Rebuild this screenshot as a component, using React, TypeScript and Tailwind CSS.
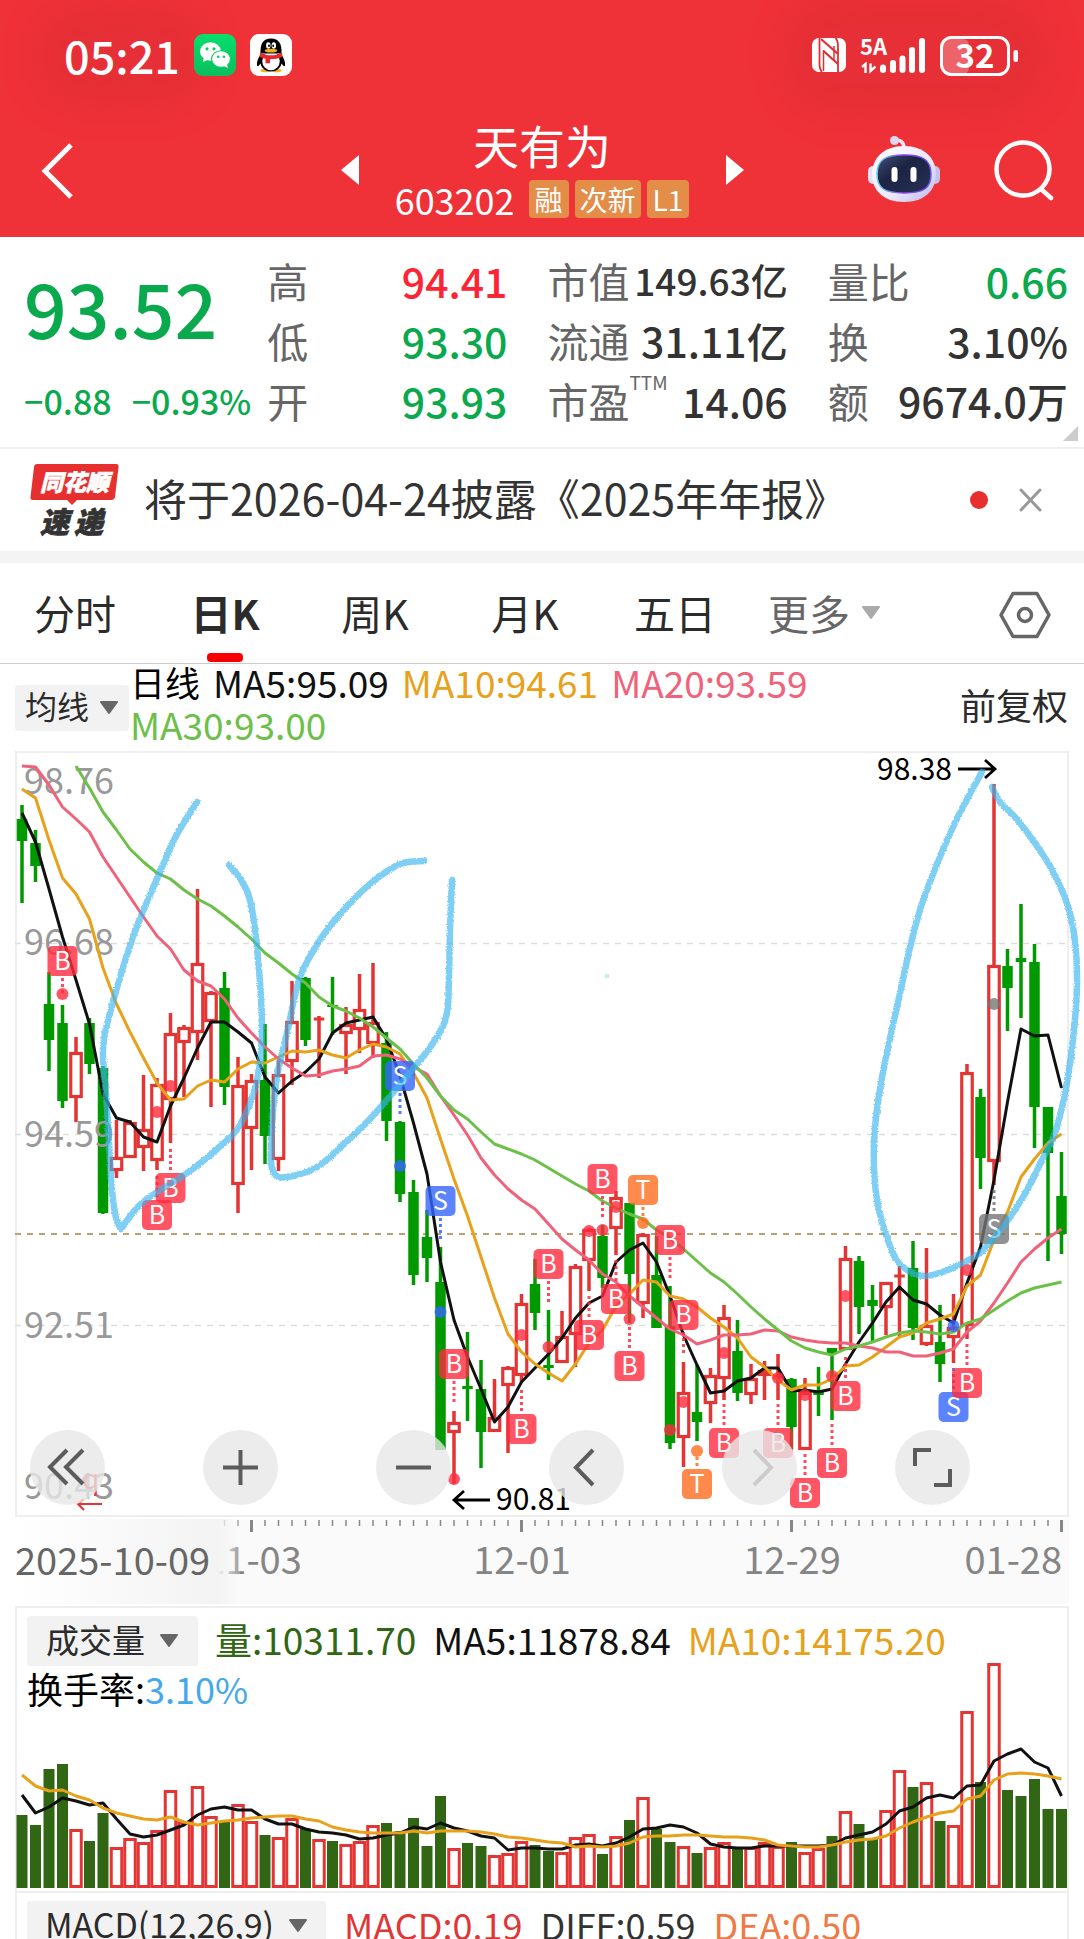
import React from "react";

const GREEN = "#009900";
const RED = "#e23534";
const ORANGE = "#e7a11a";
const PINK = "#f0627a";
const LIME = "#6cc04a";

const cx = (i: number) => 22 + i * 13.5;

type Tone = "r" | "g";
type Candle = [Tone, number, number, number, number];

// tone, high, body top, body bottom, low
const candles: Candle[] = [
  ["g", 805, 819, 841, 903], ["g", 830, 843, 866, 882], ["g", 972, 1004, 1040, 1071], ["g", 1005, 1023, 1101, 1108],
  ["r", 1037, 1052, 1098, 1122], ["g", 1018, 1023, 1064, 1074], ["g", 1066, 1068, 1213, 1214], ["r", 1120, 1157, 1171, 1178],
  ["r", 1120, 1122, 1158, 1157], ["r", 1075, 1129, 1148, 1171], ["r", 1078, 1084, 1161, 1170], ["r", 1013, 1033, 1100, 1143],
  ["r", 1025, 1027, 1043, 1097], ["r", 889, 963, 1033, 1060], ["r", 991, 992, 1022, 1107], ["g", 972, 988, 1087, 1105],
  ["r", 1057, 1085, 1185, 1213], ["r", 1074, 1080, 1129, 1170], ["g", 1024, 1080, 1136, 1164], ["r", 1060, 1074, 1160, 1171],
  ["r", 981, 1021, 1062, 1085], ["g", 977, 978, 1040, 1046], ["r", 1016, 1018, 1020, 1078], ["g", 977, 1005, 1007, 1035],
  ["r", 1007, 1024, 1034, 1074], ["r", 974, 1009, 1030, 1053], ["r", 963, 1022, 1044, 1058], ["g", 1032, 1043, 1121, 1141],
  ["g", 1121, 1122, 1194, 1202], ["g", 1180, 1192, 1275, 1285], ["g", 1210, 1237, 1258, 1282], ["g", 1247, 1282, 1450, 1450],
  ["r", 1411, 1422, 1433, 1484], ["g", 1332, 1386, 1389, 1421], ["g", 1360, 1389, 1432, 1468], ["r", 1379, 1417, 1432, 1432],
  ["r", 1366, 1367, 1386, 1453], ["r", 1294, 1303, 1376, 1382], ["g", 1259, 1284, 1313, 1330], ["g", 1310, 1365, 1368, 1380],
  ["r", 1311, 1336, 1363, 1362], ["r", 1264, 1266, 1335, 1367], ["r", 1228, 1229, 1261, 1291], ["g", 1225, 1236, 1278, 1288],
  ["r", 1191, 1197, 1229, 1255], ["g", 1203, 1203, 1274, 1323], ["r", 1233, 1234, 1304, 1318], ["g", 1236, 1275, 1328, 1328],
  ["g", 1286, 1326, 1443, 1449], ["r", 1362, 1392, 1438, 1467], ["g", 1365, 1412, 1422, 1441], ["r", 1368, 1375, 1404, 1423],
  ["r", 1305, 1317, 1379, 1400], ["g", 1320, 1351, 1393, 1401], ["r", 1364, 1378, 1395, 1404], ["r", 1361, 1370, 1376, 1400],
  ["r", 1354, 1376, 1378, 1400], ["g", 1378, 1379, 1427, 1449], ["r", 1378, 1392, 1450, 1450], ["g", 1367, 1392, 1395, 1416],
  ["g", 1348, 1348, 1353, 1420], ["r", 1246, 1258, 1350, 1350], ["g", 1256, 1261, 1307, 1334], ["g", 1285, 1300, 1306, 1342],
  ["r", 1282, 1282, 1308, 1335], ["r", 1266, 1275, 1277, 1337], ["g", 1241, 1268, 1328, 1340], ["r", 1248, 1325, 1345, 1346],
  ["g", 1305, 1342, 1364, 1382], ["r", 1294, 1327, 1338, 1363], ["r", 1064, 1072, 1326, 1339], ["g", 1089, 1097, 1158, 1189],
  ["r", 784, 965, 1162, 1185], ["g", 949, 966, 988, 1031], ["g", 904, 958, 962, 1018], ["g", 944, 962, 1107, 1148],
  ["g", 1107, 1107, 1153, 1261], ["g", 1152, 1196, 1234, 1254],
];

const ma5 = [813,842,889,937,980,1024,1094,1118,1122,1137,1142,1106,1078,1048,1022,1022,1032,1043,1077,1093,1081,1072,1059,1033,1023,1020,1017,1039,1076,1123,1174,1262,1320,1357,1389,1422,1407,1382,1368,1354,1338,1318,1303,1296,1262,1250,1243,1262,1296,1335,1365,1393,1391,1381,1378,1368,1368,1391,1390,1392,1389,1364,1342,1323,1302,1287,1300,1304,1315,1323,1283,1247,1180,1102,1029,1036,1035,1088];
const ma10 = [789,798,840,878,894,919,968,1004,1032,1058,1083,1100,1099,1086,1080,1082,1069,1062,1063,1057,1051,1052,1050,1055,1058,1050,1044,1047,1054,1073,1098,1139,1179,1216,1257,1298,1334,1352,1364,1373,1381,1364,1343,1330,1306,1294,1280,1282,1296,1299,1307,1318,1327,1338,1357,1367,1380,1390,1385,1385,1379,1366,1365,1357,1347,1337,1333,1323,1319,1314,1286,1275,1240,1212,1177,1159,1143,1134];
const ma20 = [766,767,785,807,819,832,857,877,897,917,936,949,970,981,986,999,1018,1033,1047,1059,1068,1076,1075,1071,1069,1066,1056,1055,1059,1067,1074,1096,1115,1135,1158,1175,1189,1200,1209,1224,1239,1250,1260,1274,1282,1296,1307,1318,1329,1335,1344,1340,1335,1335,1334,1330,1331,1337,1340,1342,1343,1343,1346,1348,1352,1352,1356,1356,1353,1349,1332,1321,1303,1283,1262,1249,1238,1229];
const ma30 = [766,788,812,830,849,862,873,879,890,899,906,916,927,939,953,963,974,983,997,1006,1011,1018,1027,1038,1049,1064,1078,1096,1110,1119,1132,1144,1149,1154,1160,1168,1176,1184,1191,1201,1208,1214,1219,1230,1238,1249,1261,1273,1282,1294,1307,1319,1330,1341,1348,1352,1355,1349,1346,1342,1337,1333,1331,1332,1334,1332,1323,1319,1310,1301,1293,1288,1285,1282];

type Marker = { k: "B" | "S" | "T"; i: number; top: number; dot: number; color: string };
const B = "#ff2a3f";
const S = "#3465ff";
const T = "#ff6d1f";
const markers: Marker[] = [
  { k: "B", i: 3, top: 946, dot: 994, color: B },
  { k: "B", i: 11, top: 1173, dot: 1086, color: B },
  { k: "B", i: 10, top: 1200, dot: 1112, color: B },
  { k: "S", i: 28, top: 1061, dot: 1166, color: S },
  { k: "S", i: 31, top: 1186, dot: 1312, color: S },
  { k: "B", i: 32, top: 1349, dot: 1479, color: B },
  { k: "B", i: 37, top: 1414, dot: 1335, color: B },
  { k: "B", i: 39, top: 1249, dot: 1347, color: B },
  { k: "B", i: 42, top: 1320, dot: 1231, color: B },
  { k: "B", i: 43, top: 1164, dot: 1230, color: B },
  { k: "B", i: 44, top: 1284, dot: 1207, color: B },
  { k: "T", i: 46, top: 1175, dot: 1223, color: T },
  { k: "B", i: 45, top: 1351, dot: 1319, color: B },
  { k: "B", i: 48, top: 1225, dot: 1430, color: B },
  { k: "B", i: 49, top: 1300, dot: 1402, color: B },
  { k: "T", i: 50, top: 1469, dot: 1451, color: T },
  { k: "B", i: 52, top: 1428, dot: 1353, color: B },
  { k: "B", i: 56, top: 1428, dot: 1378, color: B },
  { k: "B", i: 58, top: 1478, dot: 1395, color: B },
  { k: "B", i: 60, top: 1448, dot: 1376, color: B },
  { k: "B", i: 61, top: 1381, dot: 1296, color: B },
  { k: "S", i: 69, top: 1392, dot: 1326, color: S },
  { k: "B", i: 70, top: 1368, dot: 1270, color: B },
  { k: "S", i: 72, top: 1214, dot: 1004, color: "#777777" },
];

const volTone = "ggggrggrrrrrrrrgrrgrrgrgrrrgggggrggrrrggrrrgrgrggrgrrgrrrgrrgrggrrgrgrrgrggggg";
const volTop = [1815,1825,1769,1764,1829,1841,1813,1847,1838,1842,1830,1790,1821,1786,1816,1822,1804,1821,1835,1837,1818,1829,1839,1841,1844,1841,1825,1823,1831,1818,1846,1796,1848,1843,1846,1855,1853,1841,1845,1851,1852,1837,1834,1854,1836,1820,1797,1829,1842,1846,1853,1847,1842,1848,1847,1842,1846,1842,1852,1848,1836,1811,1824,1839,1810,1770,1787,1782,1821,1825,1711,1782,1663,1790,1796,1779,1809,1809];
const volMa5 = [1795,1813,1807,1798,1801,1805,1803,1819,1834,1837,1835,1830,1825,1815,1809,1807,1810,1810,1819,1824,1824,1829,1832,1833,1835,1839,1838,1835,1833,1827,1829,1823,1828,1831,1836,1838,1850,1848,1848,1849,1849,1845,1844,1846,1843,1837,1829,1828,1825,1827,1833,1844,1847,1848,1848,1846,1846,1846,1846,1846,1845,1838,1835,1832,1824,1811,1807,1798,1795,1798,1786,1785,1761,1754,1749,1762,1768,1796];
const volMa10 = [1775,1786,1791,1790,1796,1800,1808,1813,1816,1819,1820,1817,1822,1825,1823,1821,1820,1818,1817,1816,1816,1819,1821,1827,1830,1832,1833,1833,1833,1831,1833,1831,1831,1831,1832,1834,1837,1838,1840,1842,1843,1847,1846,1847,1846,1843,1837,1836,1836,1835,1835,1836,1837,1837,1838,1840,1845,1846,1847,1847,1845,1842,1840,1839,1836,1828,1822,1817,1813,1811,1799,1796,1780,1774,1773,1774,1776,1779];

const line = (ys: number[], from = 0) => ys.map((y, n) => `${cx(n + from)},${y}`).join(" ");

// Catmull-Rom spline through the given points
function curve(p: number[][]) {
  let d = `M${p[0][0]} ${p[0][1]}`;
  for (let i = 0; i < p.length - 1; i++) {
    const a = p[i - 1] ?? p[i];
    const b = p[i];
    const c = p[i + 1];
    const e = p[i + 2] ?? c;
    d += ` C${b[0] + (c[0] - a[0]) / 6} ${b[1] + (c[1] - a[1]) / 6} ${c[0] - (e[0] - b[0]) / 6} ${c[1] - (e[1] - b[1]) / 6} ${c[0]} ${c[1]}`;
  }
  return d;
}

const strokes = [
  [[197,802],[176,836],[160,872],[133,937],[110,1013],[103,1050],[106,1093],[109,1143],[112,1190],[116,1218],[121,1229]],
  [[121,1229],[143,1202],[187,1173],[216,1150],[240,1125],[257,1080],[262,1027],[257,947],[250,900],[241,880],[229,865]],
  [[424,861],[400,864],[370,884],[340,914],[320,940],[300,977],[287,1033],[276,1083],[271,1150],[274,1173],[287,1177],[317,1167],[345,1143],[370,1119],[417,1064],[437,1037],[447,1013],[449,975],[450,930],[452,880]],
  [[982,772],[953,827],[920,910],[900,993],[881,1083],[874,1143],[877,1200],[890,1246],[903,1267],[927,1276],[963,1263],[987,1246],[1020,1202],[1042,1160],[1056,1130],[1069,1070],[1077,983],[1071,917],[1051,868],[1020,823],[1000,802],[992,787]],
];

function Caret({ color = "#666666", w = 20 }: { color?: string; w?: number }) {
  return (
    <svg width={w} height={14} viewBox="0 0 20 14" aria-hidden="true">
      <path d="M2 1h16L10 12z" fill={color} stroke={color} strokeWidth="2" strokeLinejoin="round" />
    </svg>
  );
}

function WeChat() {
  return (
    <svg width="42" height="42" viewBox="0 0 42 42" aria-label="WeChat">
      <defs>
        <linearGradient id="wc" x1="0" y1="0" x2="0" y2="1">
          <stop offset="0" stopColor="#06df6c" />
          <stop offset="1" stopColor="#0bbd5e" />
        </linearGradient>
      </defs>
      <rect width="42" height="42" rx="9" fill="url(#wc)" />
      <path d="M10 23l-1 5 4.500-2z" fill="#fff" />
      <ellipse cx="16.500" cy="17.500" rx="10.500" ry="9.200" fill="#fff" />
      <ellipse cx="27" cy="25" rx="10" ry="8.800" fill="#09cc64" />
      <ellipse cx="27" cy="25" rx="8.900" ry="7.700" fill="#fff" />
      <path d="M30 32l3.800 2-.8-4z" fill="#fff" />
      <g fill="#0acb63">
        <circle cx="13" cy="14.800" r="1.600" /><circle cx="20" cy="14.800" r="1.600" />
        <circle cx="24.200" cy="22.800" r="1.300" /><circle cx="30" cy="22.800" r="1.300" />
      </g>
    </svg>
  );
}

function QQ() {
  return (
    <svg width="42" height="42" viewBox="0 0 42 42" aria-label="QQ">
      <rect width="42" height="42" rx="9" fill="#fff" />
      <ellipse cx="15.500" cy="36.500" rx="5" ry="1.800" fill="#f5b01a" />
      <ellipse cx="26.500" cy="36.500" rx="5" ry="1.800" fill="#f5b01a" />
      <path d="M11 20C8 24 6.500 28 7 31.500c.4 1.500 2 .3 3.500-2 1 4.500 5 8 10.500 8s9.500-3.500 10.500-8c1.500 2.300 3.100 3.500 3.500 2C35.500 28 34 24 31 20z" fill="#000" />
      <ellipse cx="21" cy="27" rx="8.800" ry="9.200" fill="#fff" />
      <path d="M10.500 19.500C10 10 13 4.500 21 4.500S32 10 31.500 19.500z" fill="#000" />
      <ellipse cx="18.300" cy="11.500" rx="2.200" ry="3.200" fill="#fff" /><ellipse cx="23.800" cy="11.500" rx="2.200" ry="3.200" fill="#fff" />
      <ellipse cx="19" cy="11.800" rx=".9" ry="1.400" /><ellipse cx="23.200" cy="11.800" rx=".9" ry="1.400" />
      <ellipse cx="21" cy="16.700" rx="6.300" ry="1.900" fill="#f5b01a" />
      <path d="M10 18.800c7 3.400 15 3.400 22 0l.5 4c-3.500 1.700-8 2.500-12.500 2.500v4h-4.500v-4.500c-2-.4-4-1-6-2z" fill="#e8262b" />
    </svg>
  );
}

function StatusBar() {
  return (
    <div className="flex h-[110px] items-center justify-between pr-[66px] pl-[64px] text-white">
      <div className="flex items-center gap-[14px]">
        <span className="rounded-full bg-[#dd2d33]/50 text-[45px] leading-[44px] font-medium shadow-[0_0_34px_26px_rgba(215,44,50,0.4)]">05:21</span>
        <WeChat />
        <QQ />
      </div>
      <div className="flex items-center rounded-full bg-[#dd2d33]/50 shadow-[0_0_34px_26px_rgba(215,44,50,0.4)]">
        <svg width="206" height="62" viewBox="811 25 206 62" role="img" aria-label="NFC, 5A signal, battery 32">
          <rect x="811" y="39" width="34" height="34" rx="7" fill="#fff" />
          <path d="M818.500 39v26c0 3 .5 6 2.500 8M837 73V47c0-3-.5-6-2.500-8" stroke="#e32e34" strokeWidth="1.800" fill="none" />
          <path d="M820 40l16.500 14.500M822.500 52L837 65" stroke="#e32e34" strokeWidth="2.200" fill="none" />
          <path d="M822.500 51v21M833 47v14" stroke="#e32e34" strokeWidth="1.500" fill="none" />
          <text x="859" y="56" fontSize="22" fontWeight="700" fill="#fff">5A</text>
          <path d="M861 68l3.500-3V74M869.500 64.500V72l5-4.500" stroke="#fff" strokeWidth="2.400" fill="none" />
          <g stroke="#fff" strokeWidth="6" strokeLinecap="round">
            <path d="M882 68.500V71M892 64V71M901.500 59.500V71M911 51V71M921 42V71" />
          </g>
          <rect x="942" y="40" width="26" height="35" rx="6" fill="#ee6269" />
          <rect x="940.500" y="38.500" width="67" height="37" rx="10" fill="none" stroke="#fff" strokeWidth="3" />
          <rect x="1012.500" y="51" width="4.500" height="12" rx="2" fill="#fff" />
          <text x="974" y="69" fontSize="33" fontWeight="700" fill="#fff" textAnchor="middle">32</text>
        </svg>
      </div>
    </div>
  );
}

function Robot() {
  return (
    <svg width="72" height="70" viewBox="868 134 72 70" aria-hidden="true">
      <defs>
        <linearGradient id="rb" x1="0" y1="0" x2="1" y2="1">
          <stop offset="0" stopColor="#ffffff" /><stop offset=".6" stopColor="#ece9fb" /><stop offset="1" stopColor="#b9b3e6" />
        </linearGradient>
        <linearGradient id="rf" x1="0" y1="0" x2="1" y2="1">
          <stop offset="0" stopColor="#44507a" /><stop offset=".4" stopColor="#1c2443" /><stop offset="1" stopColor="#283056" />
        </linearGradient>
        <linearGradient id="rr" x1="0" y1="0" x2="1" y2="0">
          <stop offset="0" stopColor="#67d3f5" /><stop offset=".5" stopColor="#8c3be0" /><stop offset="1" stopColor="#6658f0" />
        </linearGradient>
      </defs>
      <path d="M895 139.500c6-1 9 2 9 8" fill="none" stroke="#e9e4f7" strokeWidth="3.500" />
      <circle cx="894.500" cy="139.500" r="4.500" fill="#ddd7f0" />
      <rect x="868" y="165" width="10" height="18" rx="5" fill="#e4e0f6" />
      <rect x="930" y="165" width="10" height="18" rx="5" fill="#c6c0ea" />
      <path d="M904 145c20 0 32 12 32 28s-11 28-32 28-32-12-32-28 12-28 32-28z" fill="url(#rb)" />
      <path d="M904 154c19 0 27 5 27 19s-7 19-27 19-27-5-27-19 8-19 27-19z" fill="url(#rf)" stroke="url(#rr)" strokeWidth="1.500" />
      <rect x="891.500" y="166" width="6" height="15" rx="3" fill="#fff" />
      <rect x="910.500" y="166" width="6" height="15" rx="3" fill="#fff" />
    </svg>
  );
}

function Header() {
  return (
    <header className="flex h-[237px] flex-col bg-[#ef3138] text-white">
      <StatusBar />
      <div className="grid grid-cols-[1fr_auto_1fr] items-center pt-[12px]">
        <button aria-label="返回" className="ml-[40px] w-[34px]">
          <svg width="34" height="58" viewBox="0 0 34 58" fill="none" stroke="#fff" strokeWidth="5">
            <path d="M31 4L5 30l26 26" />
          </svg>
        </button>
        <div className="flex items-center gap-[36px]">
          <button aria-label="上一只">
            <svg width="18" height="30" viewBox="0 0 18 30"><path d="M18 0v30L0 15z" fill="#fff" /></svg>
          </button>
          <div className="flex w-[295px] flex-col items-center">
            <h1 className="text-[46px] leading-[44px]">天有为</h1>
            <div className="flex items-center gap-[6px] pt-[14px]">
              <span className="mr-[8px] text-[36px] leading-[34px]">603202</span>
              <span className="rounded-[4px] bg-[#e38d49] px-[6px] text-[28px] leading-[38px]">融</span>
              <span className="rounded-[4px] bg-[#e38d49] px-[5px] text-[28px] leading-[38px]">次新</span>
              <span className="rounded-[4px] bg-[#e38d49] px-[6px] text-[28px] leading-[38px]">L1</span>
            </div>
          </div>
          <button aria-label="下一只">
            <svg width="18" height="30" viewBox="0 0 18 30"><path d="M0 0v30l18-15z" fill="#fff" /></svg>
          </button>
        </div>
        <div className="flex items-center justify-end gap-[54px] pr-[30px]">
          <button aria-label="智能助手"><Robot /></button>
          <button aria-label="搜索">
            <svg width="60" height="62" viewBox="0 0 60 62" fill="none" stroke="#fff" strokeWidth="4.500">
              <circle cx="29" cy="30" r="26.500" />
              <path d="M47 50l10 9" strokeLinecap="round" />
            </svg>
          </button>
        </div>
      </div>
    </header>
  );
}

function Stat({ label, sup, value, tone, small }: { label: string; sup?: string; value: string; tone?: string; small?: boolean }) {
  return (
    <div className="flex h-[60px] items-center justify-between">
      <dt className="flex text-[41px] leading-[60px] whitespace-nowrap text-[#666666]">
        {label}
        {sup && <sup className="-top-[8px] text-[19px] leading-[40px]">{sup}</sup>}
      </dt>
      <dd className={`${small ? "text-[37px]" : "text-[41px]"} leading-[60px] font-medium whitespace-nowrap ${tone ?? "text-[#333333]"}`}>{value}</dd>
    </div>
  );
}

function Quote() {
  return (
    <section className="relative grid h-[212px] grid-cols-[227fr_240fr_240fr_240fr] gap-x-[40px] border-b-2 border-[#eeeeee] pt-[13px] pr-[16px] text-[#0aa94d]">
      <div className="min-w-0 pl-[24px]">
        <div className="text-[75px] leading-[114px] font-medium">93.52</div>
        <div className="flex gap-[20px] text-[34px] leading-[74px] font-medium whitespace-nowrap"><span>−0.88</span><span>−0.93%</span></div>
      </div>
      <dl className="min-w-0">
        <Stat label="高" value="94.41" tone="text-[#fb2536]" />
        <Stat label="低" value="93.30" tone="text-[#0aa94d]" />
        <Stat label="开" value="93.93" tone="text-[#0aa94d]" />
      </dl>
      <dl className="min-w-0">
        <Stat label="市值" value="149.63亿" small />
        <Stat label="流通" value="31.11亿" />
        <Stat label="市盈" sup="TTM" value="14.06" />
      </dl>
      <dl className="min-w-0">
        <Stat label="量比" value="0.66" tone="text-[#0aa94d]" />
        <Stat label="换" value="3.10%" />
        <Stat label="额" value="9674.0万" />
      </dl>
      <svg className="absolute right-[6px] bottom-[6px]" width="15" height="15" viewBox="0 0 15 15" aria-hidden="true"><path d="M15 0v15H0z" fill="#cccccc" /></svg>
    </section>
  );
}

function News() {
  return (
    <section className="flex h-[114px] items-center border-b-[12px] border-[#f4f4f4] pr-[42px] pl-[29px]">
      <svg width="90" height="88" viewBox="0 -6 90 88" role="img" aria-label="同花顺速递">
        <path d="M8 2h79q3 0 2.500 3L86 35q-.5 3-4 3H48l-5 5-5-5H4q-3 0-2.500-3L5 5q.5-3 3-3z" fill="#e63030" />
        <g fontStyle="italic" fontWeight="900">
          <text x="11" y="29" fontSize="23" fill="#fff" stroke="#fff" strokeWidth=".6">同花顺</text>
          <text x="11" y="71" fontSize="29" fill="#333" stroke="#333" strokeWidth=".8">速</text>
          <text x="45" y="71" fontSize="29" fill="#333" stroke="#333" strokeWidth=".8">递</text>
        </g>
      </svg>
      <a href="#news" className="ml-[25px] pb-[6px] text-[43px] leading-[60px] whitespace-nowrap text-[#333333]">将于2026-04-24披露《2025年年报》</a>
      <span className="ml-auto size-[18px] rounded-full bg-[#e82f30]" />
      <button aria-label="关闭" className="ml-[31px]">
        <svg width="23" height="24" viewBox="0 0 23 24" stroke="#999999" strokeWidth="3" strokeLinecap="round"><path d="M2 2l19 20M21 2L2 22" /></svg>
      </button>
    </section>
  );
}

function Tabs() {
  return (
    <nav className="flex h-[101px] border-b border-[#cccccc] text-[41px] text-[#2b2b2b]">
      {["分时", "日K", "周K", "月K", "五日"].map((t) => (
        <button key={t} className={`relative flex-1 ${t === "日K" ? "font-bold" : ""}`}>
          {t}
          {t === "日K" && <span className="absolute bottom-[1px] left-1/2 h-[9px] w-[36px] -translate-x-1/2 rounded-[4px] bg-[#f80000]" />}
        </button>
      ))}
      <button className="flex flex-1 items-center justify-center gap-[10px] text-[#666666]">更多<Caret color="#aaaaaa" w={22} /></button>
      <button aria-label="设置" className="flex w-[184px] items-center justify-end pt-[4px] pr-[33px]">
        <svg width="52" height="48" viewBox="0 0 52 48" fill="none" stroke="#666666" strokeWidth="3.500">
          <path d="M14 2.500h24L50 24 38 45.500H14L2 24z" strokeLinejoin="round" /><circle cx="26" cy="24" r="6.500" />
        </svg>
      </button>
    </nav>
  );
}

function Averages() {
  return (
    <div className="flex h-[87px] items-center pr-[16px] pl-[15px]">
      <button className="flex h-[46px] w-[114px] shrink-0 items-center justify-center gap-[10px] rounded-[4px] bg-[#f2f2f2] text-[32px] text-[#2b2b2b]"><span className="pb-[5px]">均线</span><Caret /></button>
      <p className="-mt-[3px] flex flex-1 flex-wrap gap-x-[13px] self-start pl-[1px] text-[37px] leading-[42px] text-[#111111]">
        <span className="text-[35px] text-black">日线</span>
        <span>MA5:95.09</span>
        <span className="text-[#e7a11a]">MA10:94.61</span>
        <span className="text-[#f0627a]">MA20:93.59</span>
        <span className="text-[#6cc04a]">MA30:93.00</span>
      </p>
      <button className="shrink-0 pb-[8px] text-[36px] text-[#2b2b2b]">前复权</button>
    </div>
  );
}

function CandleShape({ c, i }: { c: Candle; i: number }) {
  const [tone, high, top, bottom, low] = c;
  const x = cx(i);
  if (tone === "g")
    return (
      <g fill={GREEN}>
        <rect x={x - 1.75} y={high} width="3.5" height={low - high} />
        <rect x={x - 5.25} y={top} width="10.5" height={bottom - top} />
      </g>
    );
  if (bottom - top < 4)
    return (
      <g fill={RED}>
        <rect x={x - 1.75} y={high} width="3.5" height={low - high} />
        <rect x={x - 5.25} y={top - 0.5} width="10.5" height="3" />
      </g>
    );
  return (
    <g>
      <rect x={x - 1.75} y={high} width="3.5" height={Math.max(low - high, 0)} fill={RED} />
      <rect x={x - 5.25} y={top + 1.5} width="10.5" height={bottom - top - 3} fill="#fff" stroke={RED} strokeWidth="3.200" />
    </g>
  );
}

// The dotted stem joins the badge to its side of the candle
function stem(m: Marker) {
  if (m.k === "T") return m.dot < m.top ? [m.dot + 6, m.top] : [m.top + 32, m.dot];
  return m.dot < m.top ? [m.top - 24, m.top - 1] : [m.top + 32, Math.min(m.top + 55, m.dot)];
}

function MarkerShape({ m }: { m: Marker }) {
  const x = cx(m.i);
  const [from, to] = stem(m);
  return (
    <g>
      <line x1={x} x2={x} y1={from} y2={to} stroke={m.color} strokeOpacity=".85" strokeWidth="3" strokeDasharray="3 3" />
      <circle cx={x} cy={m.dot} r="6" fill={m.color} fillOpacity=".8" />
      <rect x={x - 15} y={m.top} width="30" height="30" rx="5" fill={m.color} fillOpacity=".8" />
      <text x={x} y={m.top + 24} fontSize="25" fill="#fff" textAnchor="middle">{m.k}</text>
    </g>
  );
}

function Tool({ label, children, faint }: { label: string; children: React.ReactNode; faint?: boolean }) {
  return (
    <button aria-label={label} disabled={faint} className="size-[75px] rounded-full bg-[#e7e7e7]/80">
      <svg width="75" height="75" viewBox="0 0 75 75" fill="none" stroke={faint ? "#cccccc" : "#5c5c5c"} strokeWidth="4">{children}</svg>
    </button>
  );
}

function PriceChart() {
  return (
    <section className="relative mx-[15px]">
      <svg className="block h-auto w-full overflow-visible" viewBox="15 751 1054 767" role="img" aria-label="日K线图">
        <defs>
          <filter id="crayon" filterUnits="userSpaceOnUse" x="60" y="740" width="1060" height="560">
            <feTurbulence type="fractalNoise" baseFrequency="0.7" numOctaves="2" seed="4" result="n" />
            <feDisplacementMap in="SourceGraphic" in2="n" scale="3" xChannelSelector="R" yChannelSelector="G" />
          </filter>
        </defs>
        <rect x="16" y="752" width="1052" height="764" fill="#fff" stroke="#eeeeee" strokeWidth="2" />
        <g stroke="#dddddd" strokeWidth="1.500" strokeDasharray="6 6">
          <path d="M15 943.500H1066M15 1134.500H1066M15 1325.500H1066" />
        </g>
        <path d="M15 1234H1068" stroke="#b9a274" strokeWidth="2" strokeDasharray="6 6" />
        {candles.map((c, i) => <CandleShape key={i} c={c} i={i} />)}
        <g fill="#999999" fontSize="36">
          <text x="24" y="794">98.76</text>
          <text x="24" y="955">96.68</text>
          <text x="24" y="1147">94.59</text>
          <text x="24" y="1338">92.51</text>
          <text x="24" y="1499">90.43</text>
        </g>
        <g fill="none" strokeWidth="3" strokeLinejoin="round">
          <polyline points={line(ma5)} stroke="#111" />
          <polyline points={line(ma10)} stroke={ORANGE} />
          <polyline points={line(ma20)} stroke={PINK} />
          <polyline points={line(ma30, 4)} stroke={LIME} />
        </g>
        <g fontSize="30" fill="#000">
          <text x="877" y="780">98.38</text>
          <text x="496" y="1510">90.81</text>
          <path d="M958 769h36M985 760l10 9-10 9M490 1500h-35M464 1491l-10 9 10 9" fill="none" stroke="#000" strokeWidth="2.800" />
        </g>
        <g fill="none" stroke={RED} strokeWidth="2">
          <path d="M102 1504H79M84 1499l-6 5 6 6" />
          <text x="82" y="1489" fontSize="28" fill={RED} stroke="none">q</text>
        </g>
        {markers.map((m, n) => <MarkerShape key={n} m={m} />)}
        <g fill="none" stroke="#3cb4ec" strokeOpacity=".65" strokeWidth="6.500" strokeLinecap="round" strokeLinejoin="round" filter="url(#crayon)">
          <path d={`${curve(strokes[0])} ${curve(strokes[1]).replace("M121 1229", "")}`} />
          <path d={curve(strokes[2])} />
          <path d={curve(strokes[3])} />
        </g>
        <circle cx="607" cy="976" r="2.500" fill="#c5f0f2" />
      </svg>
      <div className="absolute bottom-[13px] left-[15px] flex gap-[98px]">
        <Tool label="收起"><path d="M37 20L20 37l17 17M53 20L36 37l17 17" /></Tool>
        <Tool label="放大"><path d="M37.500 20v35M20 37.500h35" /></Tool>
        <Tool label="缩小"><path d="M20 37.500h35" /></Tool>
        <Tool label="向左"><path d="M44 20L27 37.500 44 55" /></Tool>
        <Tool label="向右" faint><path d="M32 20l17 17.500L32 55" /></Tool>
        <Tool label="全屏"><path d="M20 36V20h16M55 39v16H39" /></Tool>
      </div>
    </section>
  );
}

function TimeAxis() {
  return (
    <div className="relative mx-[15px] mt-[1px] mb-[2px] bg-[#fafafa]">
      <svg className="block h-auto w-full" viewBox="15 1519 1054 85" aria-hidden="true">
        {candles.map((_, i) => {
          const major = i === 17 || i === 37 || i === 57 || i === 77;
          return <rect key={i} x={cx(i) - (major ? 1.5 : 0.75)} y="1520" width={major ? 3 : 1.5} height={major ? 12 : 6} fill="#888888" />;
        })}
        <g fontSize="38" fill="#858585">
          <text x="253" y="1574" textAnchor="middle">11-03</text>
          <text x="522" y="1574" textAnchor="middle">12-01</text>
          <text x="792" y="1574" textAnchor="middle">12-29</text>
          <text x="1062" y="1574" textAnchor="end">01-28</text>
        </g>
      </svg>
      <div className="absolute inset-y-0 left-0 flex w-[225px] items-center bg-linear-to-r from-white via-[#f3f3f3] via-90% to-[#fafafa]/20 pb-[6px]">
        <span className="text-[38px] leading-[48px] text-[#666666]">2025-10-09</span>
      </div>
    </div>
  );
}

function Volume() {
  return (
    <section className="mx-[15px] grid">
      <svg className="block h-auto w-full [grid-area:1/1]" viewBox="15 1606 1054 287" role="img" aria-label="成交量">
        <rect x="16" y="1607" width="1052" height="285" fill="#fff" stroke="#eeeeee" strokeWidth="2" />
        {volTop.map((top, i) =>
          volTone[i] === "g" ? (
            <rect key={i} x={cx(i) - 5.5} y={top} width="11" height={1888 - top} fill="#306614" />
          ) : (
            <rect key={i} x={cx(i) - 5.25} y={top + 1.5} width="10.5" height={1885 - top} fill="#fff" stroke={RED} strokeWidth="3" />
          )
        )}
        <g fill="none" strokeWidth="3" strokeLinejoin="round">
          <polyline points={line(volMa5)} stroke="#111" />
          <polyline points={line(volMa10)} stroke={ORANGE} />
        </g>
      </svg>
      <div className="relative pt-[10px] pl-[12px] text-[37px] [grid-area:1/1]">
        <div className="flex h-[50px] items-center gap-[17px] whitespace-nowrap">
          <button className="flex h-[50px] w-[171px] items-center justify-center gap-[14px] rounded-[3px] bg-[#f2f2f2] text-[33px] text-[#2b2b2b]"><span className="pb-[2px]">成交量</span><Caret /></button>
          <span className="pb-[4px] leading-[50px] text-[#306614]">量:10311.70</span>
          <span className="pb-[4px] leading-[50px] text-[#111111]">MA5:11878.84</span>
          <span className="pb-[4px] leading-[50px] text-[#e7a11a]">MA10:14175.20</span>
        </div>
        <p className="text-[36px] leading-[44px] text-black">换手率:<span className="text-[#45a8ea]">3.10%</span></p>
      </div>
    </section>
  );
}

function Macd() {
  return (
    <section className="mx-[15px] border-x-2 border-[#eeeeee] pt-[8px] pl-[10px]">
      <div className="flex h-[50px] items-center gap-[18px] text-[36px] whitespace-nowrap">
        <button className="flex h-[50px] w-[299px] items-center justify-center gap-[14px] rounded-[3px] bg-[#f2f2f2] text-[34px] text-[#2b2b2b]"><span className="pb-[5px]">MACD(12,26,9)</span><Caret /></button>
        <span className="pb-[5px] leading-[50px] text-[#e03636]">MACD:0.19</span>
        <span className="pb-[5px] leading-[50px] text-[#333333]">DIFF:0.59</span>
        <span className="pb-[5px] leading-[50px] text-[#f07a45]">DEA:0.50</span>
      </div>
    </section>
  );
}

export default function App() {
  return (
    <main className="h-screen overflow-hidden bg-white font-['Noto_Sans_CJK_SC',sans-serif]">
      <Header />
      <Quote />
      <News />
      <Tabs />
      <Averages />
      <PriceChart />
      <TimeAxis />
      <Volume />
      <Macd />
    </main>
  );
}
